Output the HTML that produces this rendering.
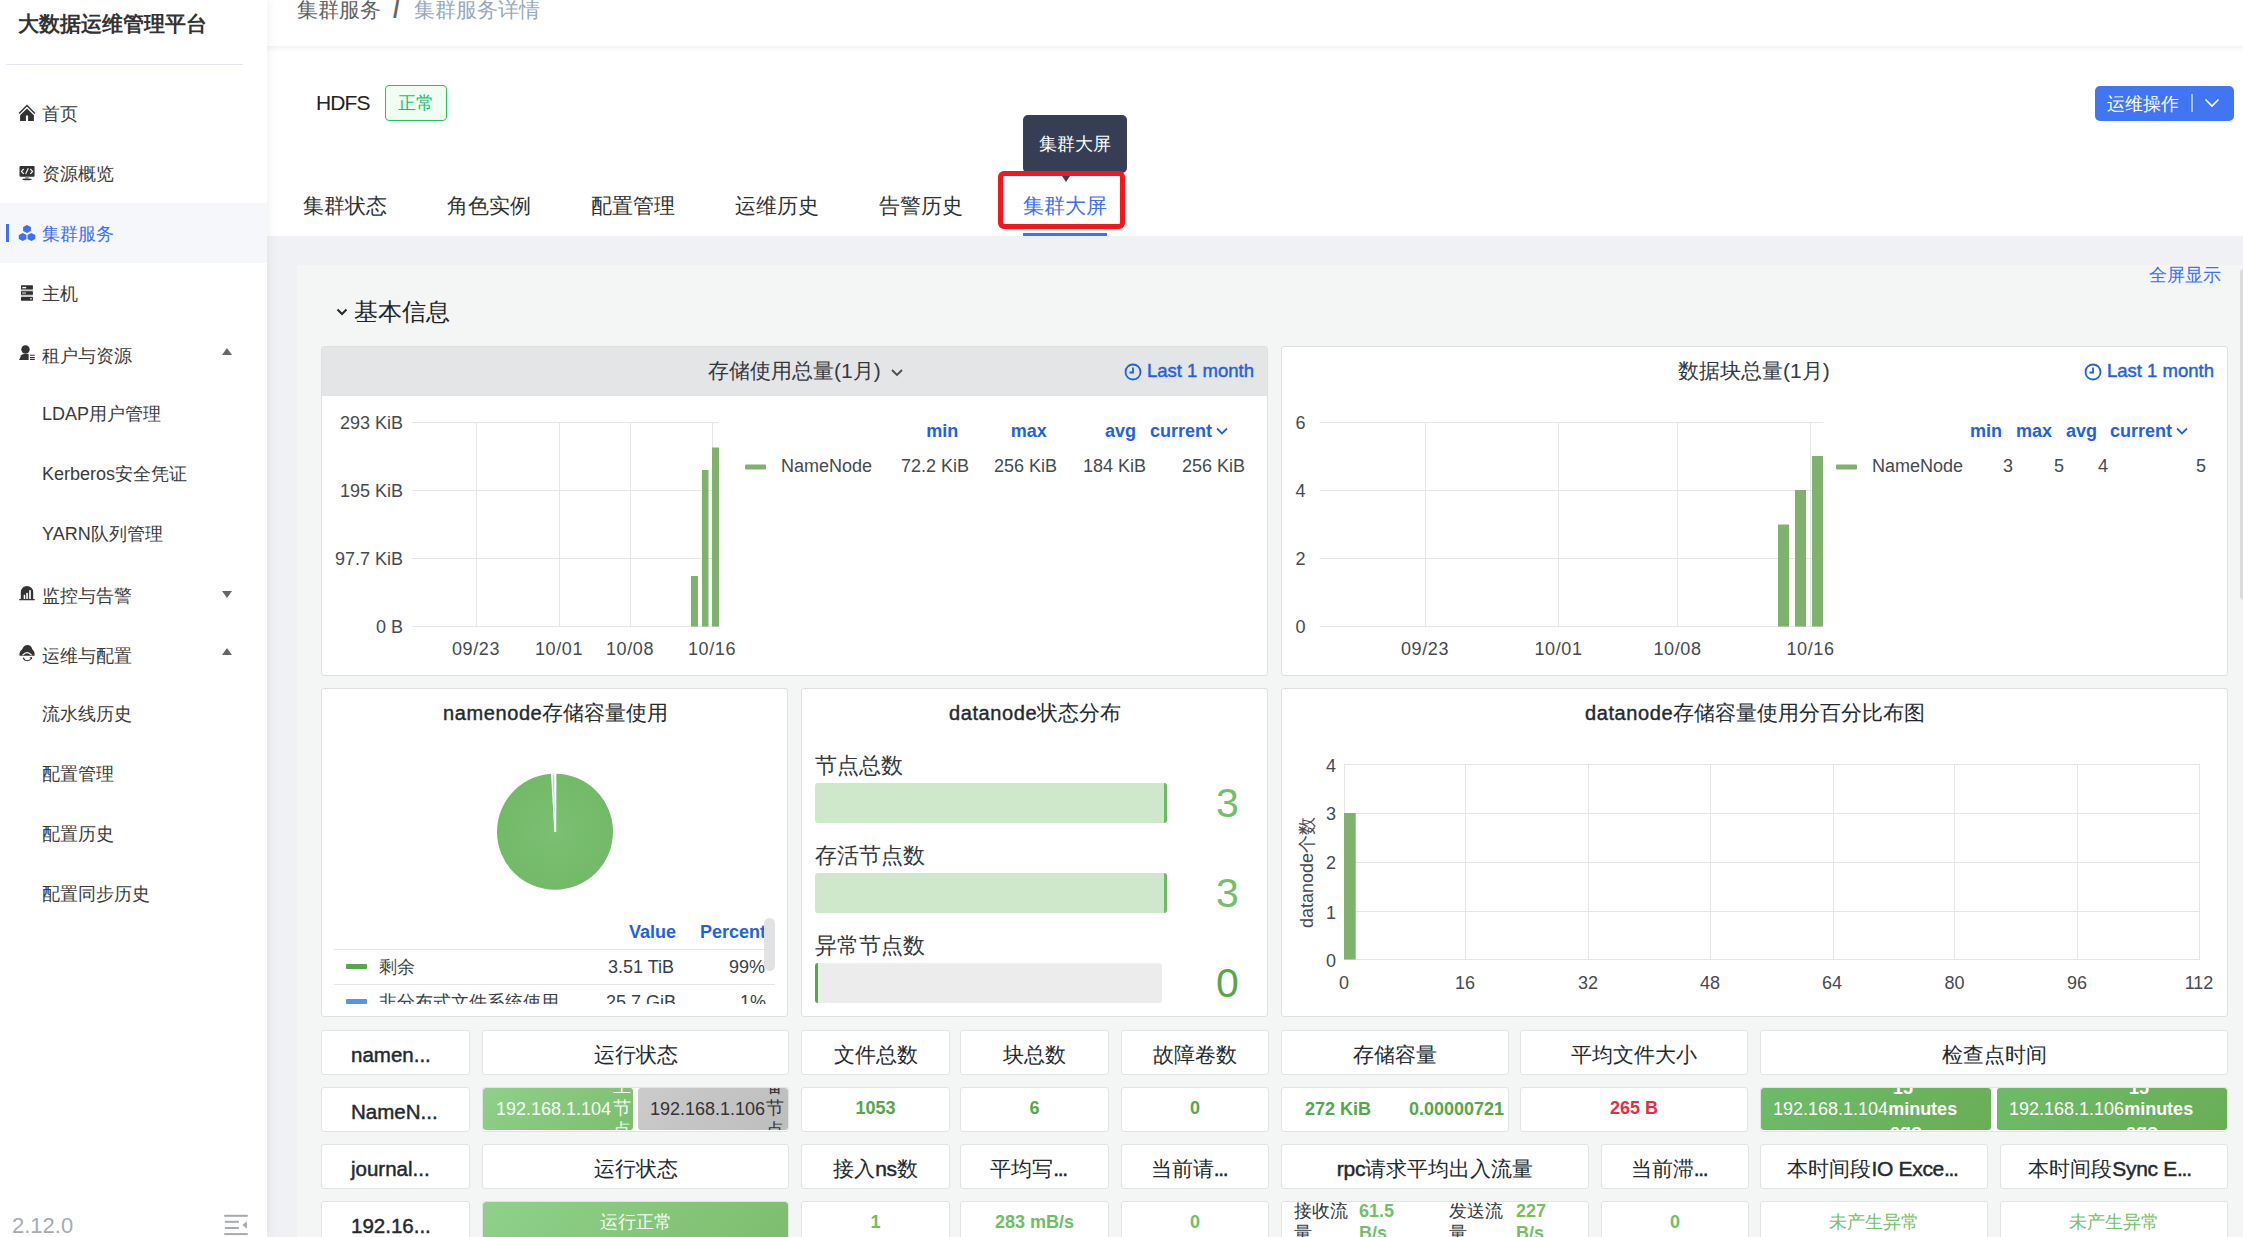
<!DOCTYPE html>
<html><head><meta charset="utf-8">
<style>
*{box-sizing:border-box;margin:0;padding:0}
html,body{width:2243px;height:1237px;overflow:hidden}
body{position:relative;background:#eff1f4;font-family:"Liberation Sans",sans-serif;color:#333}
.a{position:absolute;white-space:nowrap}
#side{position:absolute;left:0;top:0;width:267px;height:1237px;background:#fff;box-shadow:2px 0 10px rgba(0,21,41,.06);z-index:3}
.mi{position:absolute;left:42px;font-size:18px;color:#3a3a3a;line-height:20px;white-space:nowrap}
.ico{position:absolute;left:19px}
.caret{position:absolute;left:222px;width:0;height:0;border-left:5.5px solid transparent;border-right:5.5px solid transparent}
.cup{border-bottom:7px solid #666}
.cdn{border-top:7px solid #666}
#hdr{position:absolute;left:267px;top:0;width:1976px;height:236px;background:#fff;z-index:1}
.tab{position:absolute;top:193px;font-size:21px;line-height:26px;color:#303133;white-space:nowrap}
#dash{position:absolute;left:297px;top:265px;width:1946px;height:972px;background:#f4f5f5;overflow:hidden}

.pn{position:absolute;background:#fff;border:1px solid #dfe0e1;border-radius:3px;overflow:hidden}
.pt{font-size:21px;line-height:26px;color:#34383e}
.pt2{font-size:21px;line-height:26px;color:#24292e}
.pt2 b{font-weight:normal;font-size:20px;letter-spacing:0.6px;-webkit-text-stroke:0.4px #24292e}
.lnk{font-size:18.5px;line-height:24px;color:#1f62e0;-webkit-text-stroke:0.45px #1f62e0}

.dl{font-size:22px;line-height:28px;color:#34383e;z-index:1}
.bn{font-size:41px;line-height:44px;z-index:1}

.sb{position:absolute;background:#fff;border:1px solid #e2e3e4;border-radius:3px;overflow:hidden;z-index:1}
.sh{position:absolute;left:0;right:0;top:0;bottom:0;display:flex;align-items:center;justify-content:center;font-size:21px;color:#24292e;white-space:nowrap;padding-top:5px}
.sg{position:absolute;left:0;right:0;top:0;bottom:0;display:flex;align-items:center;justify-content:center;font-size:18px;white-space:nowrap;padding-bottom:4px}
.sh b{font-weight:normal;-webkit-text-stroke:0.45px #24292e;letter-spacing:-0.3px}
.sh i{font-style:normal;letter-spacing:-1.3px}
.shb{font-weight:normal;-webkit-text-stroke:0.45px #24292e;justify-content:flex-start;padding-left:29px!important;font-size:20.5px}
.sv{position:absolute;left:0;right:0;top:0;bottom:0;display:flex;align-items:center;justify-content:center;font-size:18px;font-weight:bold;color:#56a64b;white-space:nowrap;padding-bottom:2px}
.sv2{position:absolute;top:9px;font-size:18px;line-height:24px;font-weight:bold;color:#56a64b;white-space:nowrap}
.gb{position:absolute;border-radius:3px;overflow:hidden}
.ipt{position:absolute;top:8px;font-size:18px;line-height:24px;white-space:nowrap}
.cj{position:absolute;top:0;width:20px;height:42px;font-size:18px}
.cj span{position:absolute;left:0;line-height:24px}
.rl{position:absolute;top:-2px;font-size:18px;line-height:22px;color:#34383e;white-space:nowrap}
.rv{position:absolute;top:-2px;font-size:18px;line-height:22px;font-weight:bold;color:#73bf69;white-space:nowrap}
</style></head>
<body>
<div id="side">
  <div class="a" style="left:18px;top:11px;font-size:21px;line-height:26px;font-weight:bold;color:#333">大数据运维管理平台</div>
  <div class="a" style="left:6px;top:64px;width:237px;height:1px;background:#e3e6ee"></div>

  <div style="position:absolute;left:0;top:203px;width:267px;height:60px;background:#f5f7fa"></div>
  <div style="position:absolute;left:6px;top:224px;width:3px;height:18px;background:#3d70f5"></div>

  <div class="mi" style="top:104px">首页</div>
  <div class="mi" style="top:164px">资源概览</div>
  <div class="mi" style="top:224px;color:#3d70f5">集群服务</div>
  <div class="mi" style="top:284px">主机</div>
  <div class="mi" style="top:346px">租户与资源</div>
  <div class="mi" style="top:404px">LDAP用户管理</div>
  <div class="mi" style="top:464px">Kerberos安全凭证</div>
  <div class="mi" style="top:524px">YARN队列管理</div>
  <div class="mi" style="top:586px">监控与告警</div>
  <div class="mi" style="top:646px">运维与配置</div>
  <div class="mi" style="top:704px">流水线历史</div>
  <div class="mi" style="top:764px">配置管理</div>
  <div class="mi" style="top:824px">配置历史</div>
  <div class="mi" style="top:884px">配置同步历史</div>

  <div class="caret cup" style="top:348px"></div>
  <div class="caret cdn" style="top:591px"></div>
  <div class="caret cup" style="top:648px"></div>

  <div class="a" style="left:12px;top:1213px;font-size:22px;line-height:26px;color:#a5abb1">2.12.0</div>
<svg class="a" style="left:14px;top:100px" width="30" height="30"><path d="M5.1 13.4 L13 5.4 L20.9 13.4" fill="none" stroke="#333" stroke-width="1.4"/><path d="M13 8.6 L19.9 15.3 V20.9 H14.1 V15.6 H11.9 V20.9 H6.1 V15.3 Z" fill="#333"/></svg>
<svg class="a" style="left:14px;top:160px" width="30" height="30"><rect x="5.5" y="5.9" width="15.1" height="10.8" rx="1" fill="#333"/><path d="M9.7 9 L7.4 11.4 L9.7 13.8 M11.6 13.9 L14.3 8.3 M16.3 9 L18.6 11.4 L16.3 13.8" fill="none" stroke="#fff" stroke-width="1.1"/><rect x="11.3" y="16.7" width="3.5" height="2" fill="#999"/><ellipse cx="13" cy="19.4" rx="4.8" ry="0.8" fill="#333"/></svg>
<svg class="a" style="left:14px;top:218px;z-index:4" width="30" height="30"><g fill="#3d70f5"><path d="M13 6.9 L16.9 9 V12.9 L13 15 L9.1 12.9 V9 Z"/><path d="M8.7 14.9 L12.6 17 V20.9 L8.7 23 L4.8 20.9 V17 Z"/><path d="M17.4 14.9 L21.3 17 V20.9 L17.4 23 L13.5 20.9 V17 Z"/></g><rect x="12.3" y="17.5" width="1.5" height="3.5" fill="#a6bff8"/></svg>
<svg class="a" style="left:14px;top:280px" width="30" height="30"><rect x="7" y="9.6" width="11.9" height="7.4" fill="#ccc"/><rect x="7" y="5.2" width="11.9" height="4.4" rx="0.6" fill="#2f2f2f"/><rect x="7" y="11.3" width="11.9" height="3.5" rx="0.6" fill="#2f2f2f"/><rect x="7" y="17" width="11.9" height="3.8" rx="0.6" fill="#2f2f2f"/><rect x="8.3" y="6.9" width="3.9" height="1.4" fill="#fff"/><rect x="8.1" y="12.3" width="3.9" height="1.5" fill="#aaa"/><rect x="16" y="18.2" width="2" height="1.2" fill="#ddd"/></svg>
<svg class="a" style="left:14px;top:340px" width="30" height="30"><circle cx="11.5" cy="9.5" r="4.2" fill="#333"/><path d="M5.1 19.9 L7.2 15.2 Q8.4 14 10.5 14 L14.6 14 V19.9 Z" fill="#333"/><g stroke="#333" stroke-width="1.1" fill="none"><path d="M16 15.3 H20.8 M16 17.6 H20.8 M16 19.5 H20.8"/></g></svg>
<svg class="a" style="left:14px;top:580px" width="30" height="30"><path d="M6.8 19.4 V12.2 A6.2 6.2 0 0 1 19.2 12.2 V19.4 Z" fill="#333"/><rect x="5.1" y="19" width="15.8" height="1.2" rx="0.5" fill="#333"/><rect x="9.7" y="14.8" width="1.5" height="4.2" fill="#fff"/><rect x="12.1" y="12.9" width="2" height="6.1" fill="#ddd"/><rect x="15" y="10.2" width="2" height="8.8" fill="#ddd"/></svg>
<svg class="a" style="left:14px;top:640px" width="30" height="30"><path d="M5.5 15.8 Q5 11.5 8 9.5 Q10 5.1 13.5 5.1 Q17 5.1 18.5 9.5 Q21 11.5 20.6 15.8 Z" fill="#333"/><path d="M8.6 15.2 Q13 10 17.6 15.2" fill="none" stroke="#fff" stroke-width="1.1"/><path d="M9.2 17.8 Q10.5 20.8 13.2 20.8 Q15.8 20.8 17 18.6" fill="none" stroke="#333" stroke-width="1.1"/><path d="M15.5 17.4 L18.2 17 L17.8 19.6 Z" fill="#333"/></svg>
<svg class="a" style="left:210px;top:1200px" width="50" height="37"><g fill="#a6abb0"><rect x="14.2" y="14.8" width="23.6" height="2"/><rect x="14.9" y="20.8" width="14" height="2"/><rect x="14.9" y="27" width="14" height="2"/><rect x="14.2" y="33.1" width="23.6" height="2"/><path d="M32.4 25 L36.9 21.2 V28.7 Z"/></g></svg>

</div>

<div id="hdr">
  <div style="position:absolute;left:0;top:46px;width:1976px;height:6px;background:linear-gradient(#f2f3f5,#fff)"></div>
  <div class="a" style="left:30px;top:-3px;font-size:21px;line-height:26px;color:#606266">集群服务</div>
  <div class="a" style="left:126px;top:-3px;font-size:23px;line-height:26px;font-weight:bold;color:#666">/</div>
  <div class="a" style="left:147px;top:-3px;font-size:21px;line-height:26px;color:#97a8be">集群服务详情</div>

  <div class="a" style="left:49px;top:90px;font-size:21px;line-height:26px;letter-spacing:-0.9px;color:#222">HDFS</div>
  <div class="a" style="left:118px;top:85px;width:62px;height:36px;border:1px solid #23c55e;border-radius:4px;background:#effdf3;color:#19be6b;font-size:18px;line-height:34px;text-align:center">正常</div>

  <div class="a" style="left:1828px;top:86px;width:139px;height:35px;border-radius:5px;background:#4175f2"></div>
  <div class="tab" style="left:36px">集群状态</div>
  <div class="tab" style="left:180px">角色实例</div>
  <div class="tab" style="left:324px">配置管理</div>
  <div class="tab" style="left:468px">运维历史</div>
  <div class="tab" style="left:612px">告警历史</div>
  <div class="tab" style="left:756px;color:#3d6ff5">集群大屏</div>
  <div style="position:absolute;left:756px;top:233px;width:84px;height:3px;background:#4070f4"></div>
</div>


<div id="dash"></div>
<div class="a" style="left:2149px;top:263px;font-size:18px;line-height:24px;color:#3d6ff5">全屏显示</div>
<svg class="a" style="left:335px;top:306px" width="14" height="12" viewBox="0 0 14 12"><path d="M2.5 3.5 L7 8 L11.5 3.5" fill="none" stroke="#24292e" stroke-width="2"/></svg>
<div class="a" style="left:354px;top:297px;font-size:24px;line-height:30px;color:#202226">基本信息</div>

<!-- panel 1 -->
<div class="pn" style="left:321px;top:346px;width:947px;height:330px">
  <div style="position:absolute;left:0;top:0;width:945px;height:49px;background:#e4e5e7"></div>
</div>
<div class="a pt" style="left:708px;top:358px">存储使用总量(1月)</div>
<svg class="a" style="left:889px;top:366px" width="16" height="14"><path d="M3 4 L8 9 L13 4" fill="none" stroke="#464c54" stroke-width="1.8"/></svg>
<svg class="a" style="left:1124px;top:363px" width="18" height="18"><circle cx="9" cy="9" r="7.5" fill="none" stroke="#1f62e0" stroke-width="1.8"/><path d="M9 4.5 V9.5 H5.5" fill="none" stroke="#1f62e0" stroke-width="1.8"/></svg>
<div class="a lnk" style="left:1147px;top:359px">Last 1 month</div>

<!-- panel 2 -->
<div class="pn" style="left:1281px;top:346px;width:947px;height:330px"></div>
<div class="a pt" style="left:1678px;top:358px">数据块总量(1月)</div>
<svg class="a" style="left:2084px;top:363px" width="18" height="18"><circle cx="9" cy="9" r="7.5" fill="none" stroke="#1f62e0" stroke-width="1.8"/><path d="M9 4.5 V9.5 H5.5" fill="none" stroke="#1f62e0" stroke-width="1.8"/></svg>
<div class="a lnk" style="left:2107px;top:359px">Last 1 month</div>

<!-- row 2 panels -->
<div class="pn" style="left:321px;top:688px;width:467px;height:329px"></div>
<div class="pn" style="left:801px;top:688px;width:467px;height:329px"></div>
<div class="pn" style="left:1281px;top:688px;width:947px;height:329px"></div>
<div class="a pt2" style="left:443px;top:700px"><b>namenode</b>存储容量使用</div>
<div class="a pt2" style="left:949px;top:700px"><b>datanode</b>状态分布</div>
<div class="a pt2" style="left:1585px;top:700px"><b>datanode</b>存储容量使用分百分比布图</div>


<!-- tooltip / red box / button -->
<div class="a" style="left:1023px;top:115px;width:104px;height:58px;background:#363e56;border-radius:5px;z-index:2"></div>
<div class="a" style="left:1039px;top:131px;font-size:18px;line-height:26px;color:#fff;z-index:2">集群大屏</div>
<div class="a" style="left:1060px;top:173px;width:0;height:0;border-left:6px solid transparent;border-right:6px solid transparent;border-top:9px solid #363e56;z-index:2"></div>
<div class="a" style="left:998px;top:171px;width:127px;height:58px;border:5px solid #f5161b;border-radius:6px;z-index:2"></div>
<div class="a" style="left:2107px;top:91px;font-size:18px;line-height:26px;color:#fff;z-index:2">运维操作</div>
<div class="a" style="left:2191px;top:94px;width:2px;height:18px;background:#a9c0f8;z-index:2"></div>
<svg class="a" style="left:2203px;top:96px;z-index:2" width="18" height="14"><path d="M2.5 3.5 L9 10 L15.5 3.5" fill="none" stroke="#fff" stroke-width="1.6"/></svg>
<svg class="a" style="left:0;top:0;z-index:1" width="2243" height="1237" font-family="Liberation Sans, sans-serif">
<line x1="412" y1="422.5" x2="719" y2="422.5" stroke="#e5e6e8" stroke-width="1"/>
<line x1="412" y1="490.5" x2="719" y2="490.5" stroke="#e5e6e8" stroke-width="1"/>
<line x1="412" y1="558.5" x2="719" y2="558.5" stroke="#e5e6e8" stroke-width="1"/>
<line x1="412" y1="626.5" x2="719" y2="626.5" stroke="#e5e6e8" stroke-width="1"/>
<line x1="476.5" y1="422" x2="476.5" y2="626" stroke="#e5e6e8" stroke-width="1"/>
<line x1="559.5" y1="422" x2="559.5" y2="626" stroke="#e5e6e8" stroke-width="1"/>
<line x1="630.5" y1="422" x2="630.5" y2="626" stroke="#e5e6e8" stroke-width="1"/>
<line x1="712.5" y1="422" x2="712.5" y2="626" stroke="#e5e6e8" stroke-width="1"/>
<text x="403" y="429" font-size="18" fill="#464a50" text-anchor="end">293 KiB</text>
<text x="403" y="497" font-size="18" fill="#464a50" text-anchor="end">195 KiB</text>
<text x="403" y="565" font-size="18" fill="#464a50" text-anchor="end">97.7 KiB</text>
<text x="403" y="633" font-size="18" fill="#464a50" text-anchor="end">0 B</text>
<text x="476" y="655" font-size="18" letter-spacing="0.6" fill="#464a50" text-anchor="middle">09/23</text>
<text x="559" y="655" font-size="18" letter-spacing="0.6" fill="#464a50" text-anchor="middle">10/01</text>
<text x="630" y="655" font-size="18" letter-spacing="0.6" fill="#464a50" text-anchor="middle">10/08</text>
<text x="712" y="655" font-size="18" letter-spacing="0.6" fill="#464a50" text-anchor="middle">10/16</text>
<rect x="691" y="576" width="7" height="50.5" fill="#7eb26d"/>
<rect x="702" y="470" width="6.5" height="156.5" fill="#7eb26d"/>
<rect x="712" y="447.5" width="7" height="179" fill="#7eb26d"/>
<rect x="745" y="464.5" width="21" height="5" rx="1" fill="#7eb26d"/>
<text x="781" y="471.5" font-size="18" fill="#464a50">NameNode</text>
<text x="969" y="471.5" font-size="18" fill="#464a50" text-anchor="end">72.2 KiB</text>
<text x="1057" y="471.5" font-size="18" fill="#464a50" text-anchor="end">256 KiB</text>
<text x="1146" y="471.5" font-size="18" fill="#464a50" text-anchor="end">184 KiB</text>
<text x="1245" y="471.5" font-size="18" fill="#464a50" text-anchor="end">256 KiB</text>
<text x="942.3" y="436.5" font-size="18" font-weight="bold" fill="#1f62e0" text-anchor="middle">min</text>
<text x="1028.7" y="436.5" font-size="18" font-weight="bold" fill="#1f62e0" text-anchor="middle">max</text>
<text x="1120.5" y="436.5" font-size="18" font-weight="bold" fill="#1f62e0" text-anchor="middle">avg</text>
<text x="1150" y="436.5" font-size="18" font-weight="bold" fill="#1f62e0">current</text>
<path d="M1217 428.5 L1222 433.5 L1227 428.5" fill="none" stroke="#1f62e0" stroke-width="1.8"/>
<line x1="1319.5" y1="422.5" x2="1823.5" y2="422.5" stroke="#e5e6e8" stroke-width="1"/>
<line x1="1319.5" y1="490.5" x2="1823.5" y2="490.5" stroke="#e5e6e8" stroke-width="1"/>
<line x1="1319.5" y1="558.5" x2="1823.5" y2="558.5" stroke="#e5e6e8" stroke-width="1"/>
<line x1="1319.5" y1="626.5" x2="1823.5" y2="626.5" stroke="#e5e6e8" stroke-width="1"/>
<line x1="1425.5" y1="422" x2="1425.5" y2="626" stroke="#e5e6e8" stroke-width="1"/>
<line x1="1558.5" y1="422" x2="1558.5" y2="626" stroke="#e5e6e8" stroke-width="1"/>
<line x1="1677.5" y1="422" x2="1677.5" y2="626" stroke="#e5e6e8" stroke-width="1"/>
<line x1="1810.5" y1="422" x2="1810.5" y2="626" stroke="#e5e6e8" stroke-width="1"/>
<text x="1305.5" y="429" font-size="18" fill="#464a50" text-anchor="end">6</text>
<text x="1305.5" y="497" font-size="18" fill="#464a50" text-anchor="end">4</text>
<text x="1305.5" y="565" font-size="18" fill="#464a50" text-anchor="end">2</text>
<text x="1305.5" y="633" font-size="18" fill="#464a50" text-anchor="end">0</text>
<text x="1425" y="655" font-size="18" letter-spacing="0.6" fill="#464a50" text-anchor="middle">09/23</text>
<text x="1558.5" y="655" font-size="18" letter-spacing="0.6" fill="#464a50" text-anchor="middle">10/01</text>
<text x="1677.5" y="655" font-size="18" letter-spacing="0.6" fill="#464a50" text-anchor="middle">10/08</text>
<text x="1810.5" y="655" font-size="18" letter-spacing="0.6" fill="#464a50" text-anchor="middle">10/16</text>
<rect x="1778" y="524.5" width="11" height="102" fill="#7eb26d"/>
<rect x="1795" y="490" width="11" height="136.5" fill="#7eb26d"/>
<rect x="1812" y="456" width="11" height="170.5" fill="#7eb26d"/>
<rect x="1836" y="464.5" width="21" height="5" rx="1" fill="#7eb26d"/>
<text x="1872" y="471.5" font-size="18" fill="#464a50">NameNode</text>
<text x="2003" y="471.5" font-size="18" fill="#464a50">3</text>
<text x="2054" y="471.5" font-size="18" fill="#464a50">5</text>
<text x="2098" y="471.5" font-size="18" fill="#464a50">4</text>
<text x="2196" y="471.5" font-size="18" fill="#464a50">5</text>
<text x="1970" y="436.5" font-size="18" font-weight="bold" fill="#1f62e0">min</text>
<text x="2016" y="436.5" font-size="18" font-weight="bold" fill="#1f62e0">max</text>
<text x="2066" y="436.5" font-size="18" font-weight="bold" fill="#1f62e0">avg</text>
<text x="2110" y="436.5" font-size="18" font-weight="bold" fill="#1f62e0">current</text>
<path d="M2177 428.5 L2182 433.5 L2187 428.5" fill="none" stroke="#1f62e0" stroke-width="1.8"/>
<line x1="1344" y1="764.5" x2="2200" y2="764.5" stroke="#e5e6e8" stroke-width="1"/>
<line x1="1344" y1="813.5" x2="2200" y2="813.5" stroke="#e5e6e8" stroke-width="1"/>
<line x1="1344" y1="862.5" x2="2200" y2="862.5" stroke="#e5e6e8" stroke-width="1"/>
<line x1="1344" y1="911.5" x2="2200" y2="911.5" stroke="#e5e6e8" stroke-width="1"/>
<line x1="1344" y1="959.5" x2="2200" y2="959.5" stroke="#e5e6e8" stroke-width="1"/>
<line x1="1344.5" y1="764" x2="1344.5" y2="960" stroke="#e5e6e8" stroke-width="1"/>
<line x1="1465.5" y1="764" x2="1465.5" y2="960" stroke="#e5e6e8" stroke-width="1"/>
<line x1="1588.5" y1="764" x2="1588.5" y2="960" stroke="#e5e6e8" stroke-width="1"/>
<line x1="1710.5" y1="764" x2="1710.5" y2="960" stroke="#e5e6e8" stroke-width="1"/>
<line x1="1833.5" y1="764" x2="1833.5" y2="960" stroke="#e5e6e8" stroke-width="1"/>
<line x1="1954.5" y1="764" x2="1954.5" y2="960" stroke="#e5e6e8" stroke-width="1"/>
<line x1="2077.5" y1="764" x2="2077.5" y2="960" stroke="#e5e6e8" stroke-width="1"/>
<line x1="2199.5" y1="764" x2="2199.5" y2="960" stroke="#e5e6e8" stroke-width="1"/>
<text x="1336" y="771.5" font-size="18" fill="#464a50" text-anchor="end">4</text>
<text x="1336" y="819.5" font-size="18" fill="#464a50" text-anchor="end">3</text>
<text x="1336" y="869" font-size="18" fill="#464a50" text-anchor="end">2</text>
<text x="1336" y="918.5" font-size="18" fill="#464a50" text-anchor="end">1</text>
<text x="1336" y="966.5" font-size="18" fill="#464a50" text-anchor="end">0</text>
<text x="1344" y="988.5" font-size="18" fill="#464a50" text-anchor="middle">0</text>
<text x="1465" y="988.5" font-size="18" fill="#464a50" text-anchor="middle">16</text>
<text x="1588" y="988.5" font-size="18" fill="#464a50" text-anchor="middle">32</text>
<text x="1710" y="988.5" font-size="18" fill="#464a50" text-anchor="middle">48</text>
<text x="1832" y="988.5" font-size="18" fill="#464a50" text-anchor="middle">64</text>
<text x="1954.5" y="988.5" font-size="18" fill="#464a50" text-anchor="middle">80</text>
<text x="2077" y="988.5" font-size="18" fill="#464a50" text-anchor="middle">96</text>
<text x="2199" y="988.5" font-size="18" fill="#464a50" text-anchor="middle">112</text>
<rect x="1344" y="813" width="11.7" height="146.5" fill="#7eb26d"/>
<text transform="translate(1312.5 872.5) rotate(-90)" x="0" y="0" font-size="18" fill="#464a50" text-anchor="middle">datanode个数</text>
<defs><radialGradient id="pg" cx="50%" cy="50%" r="50%"><stop offset="0" stop-color="#7cc073"/><stop offset="1" stop-color="#72b968"/></radialGradient></defs>
<circle cx="555" cy="831.7" r="58" fill="url(#pg)"/>
<path d="M554.4 832 L551 773.5 L556.4 773.5 L556.2 832 Z" fill="#fff"/>
<path d="M554.8 829 L552.6 774.5 L554.2 774.5 Z" fill="#bcd3f7"/>
</svg>

<!-- panel 3 legend -->
<div class="a" style="left:334px;top:918px;width:441px;height:86px;overflow:hidden;z-index:1">
  <div class="a" style="left:295px;top:2px;font-size:18px;line-height:24px;font-weight:bold;color:#1f62e0">Value</div>
  <div class="a" style="left:366px;top:2px;font-size:18px;line-height:24px;font-weight:bold;color:#1f62e0">Percent</div>
  <div class="a" style="left:0;top:31px;width:441px;height:1px;background:#e4e5e6"></div>
  <div class="a" style="left:12px;top:46px;width:21px;height:5px;border-radius:1px;background:#56a64b"></div>
  <div class="a" style="left:45px;top:37px;font-size:18px;line-height:24px;color:#3a3f45">剩余</div>
  <div class="a" style="left:274px;top:37px;font-size:18px;line-height:24px;color:#3a3f45">3.51 TiB</div>
  <div class="a" style="left:395px;top:37px;font-size:18px;line-height:24px;color:#3a3f45">99%</div>
  <div class="a" style="left:0;top:66px;width:441px;height:1px;background:#e4e5e6"></div>
  <div class="a" style="left:12px;top:81px;width:21px;height:5px;border-radius:1px;background:#5794f2"></div>
  <div class="a" style="left:45px;top:72px;font-size:18px;line-height:24px;color:#3a3f45">非分布式文件系统使用</div>
  <div class="a" style="left:272px;top:72px;font-size:18px;line-height:24px;color:#3a3f45">25.7 GiB</div>
  <div class="a" style="left:406px;top:72px;font-size:18px;line-height:24px;color:#3a3f45">1%</div>
  <div class="a" style="left:430px;top:0;width:11px;height:53px;border-radius:6px;background:#e1e2e4"></div>
</div>

<!-- panel 4 -->
<div class="a dl" style="left:815px;top:752px">节点总数</div>
<div class="a" style="left:815px;top:783px;width:352px;height:40px;background:#cfe8cb;border-radius:3px;border-right:3px solid #6cbb62;z-index:1"></div>
<div class="a bn" style="left:1216px;top:781px;color:#73bf69">3</div>
<div class="a dl" style="left:815px;top:842px">存活节点数</div>
<div class="a" style="left:815px;top:873px;width:352px;height:40px;background:#cfe8cb;border-radius:3px;border-right:3px solid #6cbb62;z-index:1"></div>
<div class="a bn" style="left:1216px;top:871px;color:#73bf69">3</div>
<div class="a dl" style="left:815px;top:932px">异常节点数</div>
<div class="a" style="left:815px;top:963px;width:347px;height:40px;background:#ececec;border-radius:3px;border-left:3px solid #56a64b;z-index:1"></div>
<div class="a bn" style="left:1216px;top:961px;color:#56a64b">0</div>
<div class="sb" style="left:321px;top:1030px;width:149px;height:45px;"><div class="sh shb">namen...</div></div>
<div class="sb" style="left:482px;top:1030px;width:307px;height:45px;"><div class="sh">运行状态</div></div>
<div class="sb" style="left:801px;top:1030px;width:149px;height:45px;"><div class="sh">文件总数</div></div>
<div class="sb" style="left:960px;top:1030px;width:149px;height:45px;"><div class="sh">块总数</div></div>
<div class="sb" style="left:1121px;top:1030px;width:148px;height:45px;"><div class="sh">故障卷数</div></div>
<div class="sb" style="left:1281px;top:1030px;width:228px;height:45px;"><div class="sh">存储容量</div></div>
<div class="sb" style="left:1520px;top:1030px;width:228px;height:45px;"><div class="sh">平均文件大小</div></div>
<div class="sb" style="left:1760px;top:1030px;width:468px;height:45px;"><div class="sh">检查点时间</div></div>
<div class="sb" style="left:321px;top:1087px;width:149px;height:45px;"><div class="sh shb">NameN...</div></div>
<div class="sb" style="left:482px;top:1087px;width:307px;height:45px;"><div class="gb" style="left:0;top:0;width:150px;height:42px;background:linear-gradient(135deg,#8fd18a,#7dbd6e)"><div class="ipt" style="left:13px;top:9px;color:#f4fff2">192.168.1.104</div><div class="cj" style="left:130px;color:#f4fff2"><span style="top:-14px">主</span><span style="top:8px">节</span><span style="top:30px">点</span></div></div>
<div class="gb" style="left:155px;top:0;width:150px;height:42px;background:linear-gradient(135deg,#cbcbcb,#bdbdbd)"><div class="ipt" style="left:12px;top:9px;color:#333">192.168.1.106</div><div class="cj" style="left:128px;color:#333"><span style="top:-14px">备</span><span style="top:8px">节</span><span style="top:30px">点</span></div></div></div>
<div class="sb" style="left:801px;top:1087px;width:149px;height:45px;"><div class="sv">1053</div></div>
<div class="sb" style="left:960px;top:1087px;width:149px;height:45px;"><div class="sv">6</div></div>
<div class="sb" style="left:1121px;top:1087px;width:148px;height:45px;"><div class="sv">0</div></div>
<div class="sb" style="left:1281px;top:1087px;width:228px;height:45px;"><div class="sv2" style="left:23px">272 KiB</div><div class="sv2" style="left:127px">0.00000721</div></div>
<div class="sb" style="left:1520px;top:1087px;width:228px;height:45px;"><div class="sv" style="color:#e02f44">265 B</div></div>
<div class="sb" style="left:1760px;top:1087px;width:468px;height:45px;"><div class="gb" style="left:0;top:0;width:230px;height:42px;background:linear-gradient(135deg,#6dbb69,#69ae55)"><div class="ipt" style="left:12px;top:9px;color:#fff;font-size:18px">192.168.1.104<b>minutes</b></div><div class="ipt" style="left:132px;top:-12px;color:#fff;font-weight:bold">15</div><div class="ipt" style="left:129px;top:31px;color:#fff;font-weight:bold">ago</div></div>
<div class="gb" style="left:236px;top:0;width:230px;height:42px;background:linear-gradient(135deg,#6dbb69,#69ae55)"><div class="ipt" style="left:12px;top:9px;color:#fff;font-size:18px">192.168.1.106<b>minutes</b></div><div class="ipt" style="left:132px;top:-12px;color:#fff;font-weight:bold">15</div><div class="ipt" style="left:129px;top:31px;color:#fff;font-weight:bold">ago</div></div></div>
<div class="sb" style="left:321px;top:1144px;width:149px;height:45px;"><div class="sh shb">journal...</div></div>
<div class="sb" style="left:482px;top:1144px;width:307px;height:45px;"><div class="sh">运行状态</div></div>
<div class="sb" style="left:801px;top:1144px;width:149px;height:45px;"><div class="sh">接入<b>ns</b>数</div></div>
<div class="sb" style="left:960px;top:1144px;width:149px;height:45px;"><div class="sh" style="padding-right:12px">平均写<b><i>...</i></b></div></div>
<div class="sb" style="left:1121px;top:1144px;width:148px;height:45px;"><div class="sh" style="padding-right:12px">当前请<b><i>...</i></b></div></div>
<div class="sb" style="left:1281px;top:1144px;width:308px;height:45px;"><div class="sh"><b>rpc</b>请求平均出入流量</div></div>
<div class="sb" style="left:1601px;top:1144px;width:148px;height:45px;"><div class="sh" style="padding-right:12px">当前滞<b><i>...</i></b></div></div>
<div class="sb" style="left:1760px;top:1144px;width:228px;height:45px;"><div class="sh" style="padding-right:3px">本时间段<b>IO Exce<i>...</i></b></div></div>
<div class="sb" style="left:2000px;top:1144px;width:228px;height:45px;"><div class="sh" style="padding-right:9px">本时间段<b>Sync E<i>...</i></b></div></div>
<div class="sb" style="left:321px;top:1201px;width:149px;height:45px;"><div class="sh shb">192.16...</div></div>
<div class="sb" style="left:482px;top:1201px;width:307px;height:45px;"><div class="gb" style="left:0;top:0;width:305px;height:44px;background:linear-gradient(135deg,#8fd18a,#7dbd6e)"><div class="sg" style="color:#f4fff2">运行正常</div></div></div>
<div class="sb" style="left:801px;top:1201px;width:149px;height:45px;"><div class="sv" style="color:#6cbf62">1</div></div>
<div class="sb" style="left:960px;top:1201px;width:149px;height:45px;"><div class="sv" style="color:#6cbf62">283 mB/s</div></div>
<div class="sb" style="left:1121px;top:1201px;width:148px;height:45px;"><div class="sv" style="color:#6cbf62">0</div></div>
<div class="sb" style="left:1281px;top:1201px;width:308px;height:45px;"><div class="rl" style="left:12px">接收流<br>量</div><div class="rv" style="left:77px">61.5<br>B/s</div><div class="rl" style="left:167px">发送流<br>量</div><div class="rv" style="left:234px">227<br>B/s</div></div>
<div class="sb" style="left:1601px;top:1201px;width:148px;height:45px;"><div class="sv" style="color:#6cbf62">0</div></div>
<div class="sb" style="left:1760px;top:1201px;width:228px;height:45px;"><div class="sg" style="color:#73bf69">未产生异常</div></div>
<div class="sb" style="left:2000px;top:1201px;width:228px;height:45px;"><div class="sg" style="color:#73bf69">未产生异常</div></div>
<div class="a" style="left:2240px;top:269px;width:8px;height:331px;border-radius:4px;background:#dadbdd;z-index:2"></div>
</body></html>
